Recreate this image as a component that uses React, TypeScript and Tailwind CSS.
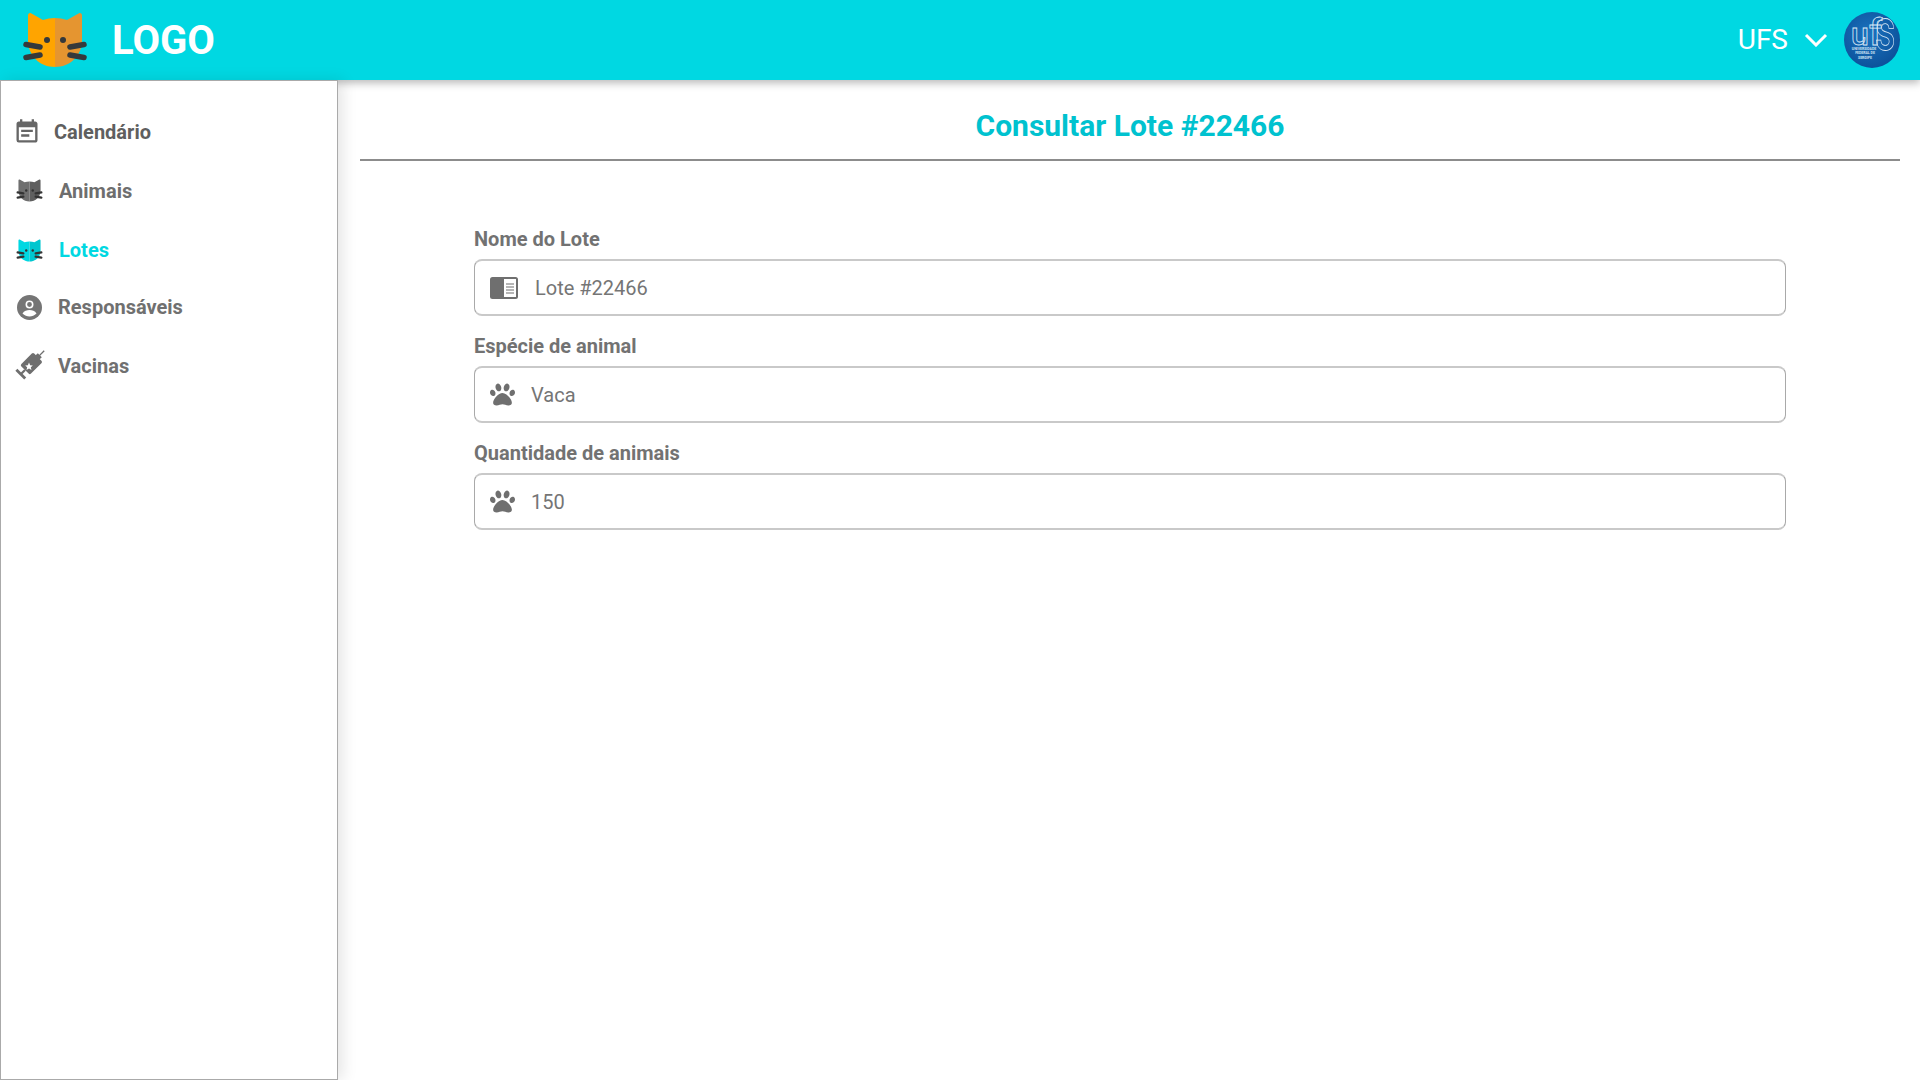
import type { ReactNode } from "react";
import { FaPaw } from "react-icons/fa";
import { MdEventNote } from "react-icons/md";

type CatProps = {
    left: string;
    right: string;
    whisker: string;
    className?: string;
};

function CatIcon({ left, right, whisker, className }: CatProps) {
    return (
        <svg viewBox="0 0 66 56" className={className}>
            <path d="M33 6 C28.500 6 25 6.800 21 8 L9 1.300 C7.500 .5 6 1.500 6 3.500 V28 C6 44 18 55 33 55 Z" fill={left} />
            <path d="M33 6 C37.500 6 41 6.800 45 8 L57 1.300 C58.500 .5 60 1.500 60 3.500 V28 C60 44 48 55 33 55 Z" fill={right} />
            <circle cx="25" cy="28" r="3" fill={whisker} />
            <circle cx="41" cy="28" r="3" fill={whisker} />
            <g stroke={whisker} strokeWidth="5.500" strokeLinecap="round">
                <path d="M4 32.500 L18 35" />
                <path d="M4 45.500 L18 43" />
                <path d="M62 32.500 L48 35" />
                <path d="M62 45.500 L48 43" />
            </g>
        </svg>
    );
}

function SyringeIcon() {
    return (
        <svg viewBox="0 0 30 30" className="ml-[-5px] h-[34px] w-[34px] shrink-0">
            <g transform="rotate(45 15 15)" fill="#6f6f6f">
                <rect x="14.400" y="-4" width="1.200" height="7" />
                <rect x="12.500" y="1.500" width="5" height="3" />
                <rect x="9" y="4" width="12" height="16" rx="1.500" />
                <rect x="14" y="20" width="2" height="5" />
                <rect x="9.500" y="24" width="11" height="2.500" />
            </g>
            <path d="M15 12 l1 2.300 2.400 .2 -1.800 1.600 .6 2.400 -2.200-1.300 -2.200 1.300 .6-2.400 -1.800-1.600 2.400-.2z" fill="#fff" />
        </svg>
    );
}

function PersonCircleIcon() {
    return (
        <svg viewBox="0 0 25 25" className="h-[25px] w-[25px]">
            <circle cx="12.500" cy="12.500" r="12.500" fill="#757575" />
            <circle cx="12.500" cy="9.500" r="3.200" fill="#757575" stroke="#fff" strokeWidth="1.600" />
            <path d="M5.500 18.500 C7 15.800 10 15 12.500 15 C15 15 18 15.800 19.500 18.500 C17.500 20.500 15 21.500 12.500 21.500 C10 21.500 7.500 20.500 5.500 18.500 Z" fill="#fff" />
        </svg>
    );
}

function NewspaperIcon() {
    return (
        <svg viewBox="0 0 28 22" className="h-[22px] w-[28px]">
            <rect x="0" y="0" width="28" height="22" rx="2.500" fill="#6f6f6f" />
            <rect x="14" y="2" width="12" height="18" fill="#fff" />
            <path d="M16 7 h8 M16 10 h8 M16 13 h8 M16 16 h8" stroke="#6f6f6f" strokeWidth="1.200" />
        </svg>
    );
}

function UfsLogo() {
    return (
        <svg viewBox="0 0 56 56" className="h-14 w-14">
            <defs>
                <radialGradient id="ufsBlue" cx="45%" cy="40%" r="65%">
                    <stop offset="0%" stopColor="#1b74c0" />
                    <stop offset="100%" stopColor="#0b4f98" />
                </radialGradient>
            </defs>
            <circle cx="28" cy="28" r="28" fill="url(#ufsBlue)" />
            <g fontFamily="Roboto, sans-serif" fontWeight="500" fill="none" stroke="#dcebf7" strokeWidth="0.800">
                <text x="7" y="33" fontSize="32">u</text>
                <text x="25" y="33" fontSize="37">f</text>
                <text transform="translate(31 38) scale(0.66 1)" fontSize="60">s</text>
            </g>
            <g fontFamily="Roboto, sans-serif" fontWeight="700" fontSize="3.500" fill="#cfe2f3" textAnchor="middle">
                <text x="20" y="37.500">UNIVERSIDADE</text>
                <text x="21" y="42">FEDERAL DE</text>
                <text x="21" y="46.500">SERGIPE</text>
            </g>
        </svg>
    );
}

type NavItem = {
    label: string;
    icon: ReactNode;
    rowClass: string;
    textClass: string;
    active?: boolean;
};

const navItems: NavItem[] = [
    {
        label: "Calendário",
        icon: <MdEventNote className="ml-[-4.500px] h-[28px] w-[28px] text-[#666666]" />,
        rowClass: "h-[59px]",
        textClass: "ml-[7px] text-[#5f5f5f]",
    },
    {
        label: "Animais",
        icon: <CatIcon left="#6f6f6f" right="#5f5f5f" whisker="#333333" className="ml-[-1px] h-[23px] w-[27px]" />,
        rowClass: "h-[59px]",
        textClass: "ml-[12px] text-[#6e6e6e]",
    },
    {
        label: "Lotes",
        icon: <CatIcon left="#00d8e2" right="#00c6cf" whisker="#333333" className="ml-[-1px] h-[23px] w-[27px]" />,
        rowClass: "h-[58px] pt-[2px]",
        textClass: "ml-[12px] text-[#00d8e2]",
        active: true,
    },
    {
        label: "Responsáveis",
        icon: <PersonCircleIcon />,
        rowClass: "h-[58px]",
        textClass: "ml-[11px] text-[#707070]",
    },
    {
        label: "Vacinas",
        icon: <SyringeIcon />,
        rowClass: "h-[59px]",
        textClass: "ml-[11px] text-[#707070]",
    },
];

type FieldProps = {
    label: string;
    value: string;
    icon: ReactNode;
    gapClass: string;
};

function Field({ label, value, icon, gapClass }: FieldProps) {
    return (
        <div>
            <div className="text-[20px] leading-[24px] font-bold text-[#727272]">{label}</div>
            <div className="mt-[8px] flex h-[57px] items-center rounded-[8px] border border-t-2 border-b-2 border-[#a9a9a9] border-t-[#c9c9c9] border-b-[#c9c9c9] pl-[15px]">
                {icon}
                <span className={`${gapClass} text-[20px] text-[#757575]`}>{value}</span>
            </div>
        </div>
    );
}

export default function App() {
    return (
        <div className="flex h-[1080px] w-[1920px] flex-col overflow-hidden bg-white font-['Roboto',sans-serif]">
            <header className="relative z-20 flex h-20 shrink-0 items-center bg-[#00d8e2] pr-5 pl-[22px] shadow-[0_3px_8px_rgba(0,0,0,0.28)]">
                <CatIcon left="#ffa400" right="#e59530" whisker="#35393b" className="h-[56px] w-[66px]" />
                <span className="mt-[2px] ml-[24px] text-[40px] leading-none font-bold text-white">LOGO</span>
                <div className="ml-auto flex items-center">
                    <span className="text-[28px] text-white">UFS</span>
                    <svg viewBox="0 0 24 14" className="ml-[16px] h-[14px] w-[24px]">
                        <path d="M2 2 L12 12 L22 2" fill="none" stroke="#fff" strokeWidth="3" />
                    </svg>
                    <div className="ml-[16px]">
                        <UfsLogo />
                    </div>
                </div>
            </header>

            <div className="flex min-h-0 flex-1">
                <aside className="relative z-30 w-[338px] shrink-0 border border-[#aaaaaa] bg-white pt-[21px] pl-[16px] shadow-[5px_0_14px_rgba(0,0,0,0.1)]">
                    <nav className="flex flex-col">
                        {navItems.map((item) => (
                            <div key={item.label} className={`flex items-center ${item.rowClass}`}>
                                <div className="flex w-[30px] items-center">{item.icon}</div>
                                <span className={`${item.textClass} text-[20px] font-bold`}>{item.label}</span>
                            </div>
                        ))}
                    </nav>
                </aside>

                <main className="min-w-0 flex-1 pt-[21px] pr-5 pl-[22px]">
                    <h1 className="text-center text-[30px] leading-[50px] font-bold text-[#00c2cf]">
                        Consultar Lote #22466
                    </h1>
                    <div className="mt-[8px] h-[2px] bg-[#8c8c8c]" />

                    <div className="mx-auto mt-[66px] flex w-[1312px] flex-col gap-[18px]">
                        <Field label="Nome do Lote" value="Lote #22466" icon={<NewspaperIcon />} gapClass="ml-[17px]" />
                        <Field
                            label="Espécie de animal"
                            value="Vaca"
                            icon={<FaPaw className="h-[25px] w-[25px] text-[#6f6f6f]" />}
                            gapClass="ml-4"
                        />
                        <Field
                            label="Quantidade de animais"
                            value="150"
                            icon={<FaPaw className="h-[25px] w-[25px] text-[#6f6f6f]" />}
                            gapClass="ml-4"
                        />
                    </div>
                </main>
            </div>
        </div>
    );
}
